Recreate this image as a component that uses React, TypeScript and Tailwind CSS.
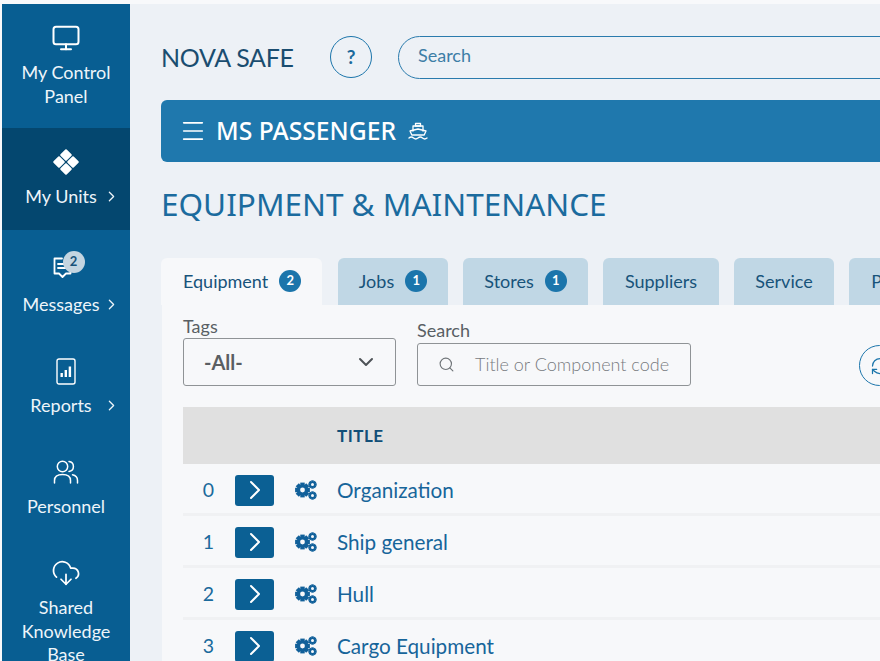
import { ChevronDown, ChevronRight, CloudDownload, Menu, Monitor, RotateCcw, Search } from 'lucide-react';

function UnitsIcon() {
  return (
    <svg width="28" height="28" viewBox="0 0 28 28" fill="white">
      <rect x="9.6" y="2.6" width="8.8" height="8.8" rx="1" transform="rotate(45 14 7)" />
      <rect x="9.6" y="16.6" width="8.8" height="8.8" rx="1" transform="rotate(45 14 21)" />
      <rect x="2.6" y="9.6" width="8.8" height="8.8" rx="1" transform="rotate(45 7 14)" />
      <rect x="16.6" y="9.6" width="8.8" height="8.8" rx="1" transform="rotate(45 21 14)" />
    </svg>
  );
}

function MessagesIcon() {
  return (
    <svg
      width="19"
      height="22"
      viewBox="0 0 19 22"
      fill="none"
      stroke="white"
      strokeWidth="1.8"
      strokeLinejoin="round"
      strokeLinecap="round"
      className="-translate-x-[4px] translate-y-[4px]"
    >
      <path d="M9 1.500H1.500V16.500H6L9.500 20 13 16.500H17.500V13" />
      <path d="M5 7h6M5 11h8" />
    </svg>
  );
}

function ReportsIcon() {
  return (
    <svg width="20" height="27" viewBox="0 0 20 27" fill="none">
      <rect x="1" y="1" width="18" height="25" rx="2" stroke="white" strokeWidth="1.4" />
      <rect x="4.5" y="15" width="2.4" height="4" fill="white" />
      <rect x="8.6" y="12" width="2.4" height="7" fill="white" />
      <rect x="12.7" y="8.5" width="2.4" height="10.5" fill="white" />
    </svg>
  );
}

function PersonnelIcon() {
  return (
    <svg width="26" height="26" viewBox="0 0 26 26" fill="none" stroke="white" strokeWidth="1.5" strokeLinecap="round">
      <circle cx="9.5" cy="7.5" r="5.2" />
      <path d="M1.5 24v-2.5c0-3.6 3-6 8-6s8 2.4 8 6V24" />
      <path d="M16 2.6c2.6.3 4.4 2.4 4.4 4.9s-1.800 4.600-4.400 4.900" />
      <path d="M19.500 15.800c3 .6 5 2.700 5 5.700V24" />
    </svg>
  );
}

function ShipIcon() {
  return (
    <svg width="20" height="18" viewBox="0 0 20 18" fill="none" stroke="white" strokeWidth="1.3" strokeLinejoin="round" strokeLinecap="round">
      <path d="M7.500 1.500h5V4h-5z" />
      <path d="M5 9V4h10v5" />
      <path d="M2 9l8-2 8 2-1.800 4H3.800z" />
      <path d="M1 16c1.500-1.300 3-1.300 4.500 0s3 1.300 4.500 0 3-1.300 4.500 0 3 1.300 4.500 0" />
    </svg>
  );
}

function Gear({ cx, cy, r, hole }: { cx: number; cy: number; r: number; hole: number }) {
  const teeth = [0, 45, 90, 135];
  return (
    <g>
      {teeth.map((a) => (
        <rect
          key={a}
          x={cx - r * 0.3}
          y={cy - r}
          width={r * 0.6}
          height={r * 2}
          fill="#11609a"
          transform={`rotate(${a} ${cx} ${cy})`}
        />
      ))}
      <circle cx={cx} cy={cy} r={r * 0.74} fill="#11609a" />
      <circle cx={cx} cy={cy} r={hole} fill="#f7f8fa" />
    </g>
  );
}

function GearsIcon() {
  return (
    <svg width="22" height="20" viewBox="0 0 22 20" className="shrink-0">
      <Gear cx={7.500} cy={10} r={7.400} hole={2.400} />
      <Gear cx={17.500} cy={4.500} r={4.200} hole={1.500} />
      <Gear cx={17.500} cy={15.500} r={4.200} hole={1.500} />
    </svg>
  );
}

function NavItem({
  icon,
  label,
  arrow,
  active,
  className,
}: {
  icon: React.ReactNode;
  label: string[];
  arrow?: boolean;
  active?: boolean;
  className?: string;
}) {
  return (
    <div className={`flex flex-col items-center pt-5 ${active ? 'bg-[#04476f]' : ''} ${className}`}>
      <div className="relative flex h-7 items-center justify-center">{icon}</div>
      <div className="relative mt-[9px] w-full text-center text-[18px] leading-[23.500px] text-[#eef5fa]">
        {label.map((line) => (
          <div key={line} className={arrow ? 'pr-[10px]' : ''}>
            {line}
          </div>
        ))}
        {arrow && <ChevronRight className="absolute left-[101px] top-[3px] h-[17px] w-[17px]" strokeWidth={1.800} />}
      </div>
    </div>
  );
}

function Badge({ n }: { n: number }) {
  return (
    <span className="flex h-[22px] w-[22px] items-center justify-center rounded-full bg-[#1b75ab] text-[13px] font-bold text-white">
      {n}
    </span>
  );
}

function Tab({ label, badge, width, active }: { label: string; badge?: number; width: string; active?: boolean }) {
  return (
    <div
      className={`flex h-[47px] shrink-0 items-center gap-[11px] rounded-t-md pb-[1px] text-[18px] text-[#17537a] ${width} ${
        active ? 'mr-[1px] bg-[#f7f8fa] pl-[22px]' : 'justify-center bg-[#c0d7e5]'
      }`}
    >
      <span>{label}</span>
      {badge !== undefined && <Badge n={badge} />}
    </div>
  );
}

const rows = ['Organization', 'Ship general', 'Hull', 'Cargo Equipment'];

export default function App() {
  return (
    <div className="flex h-[661px] w-[880px] overflow-hidden bg-[#f8f9fb] pl-[2px] pt-[4px] font-['Lato',sans-serif]">
      {/* Sidebar */}
      <aside className="w-[128px] shrink-0 bg-[#085e92]">
        <NavItem className="h-[124px]" icon={<Monitor className="h-[30px] w-[30px] text-white" strokeWidth={1.600} />} label={['My Control', 'Panel']} />
        <NavItem className="h-[102px]" active icon={<UnitsIcon />} label={['My Units']} arrow />
        <NavItem
          className="h-[107px] [&>div:last-child]:mt-[15px]"
          icon={
            <>
              <MessagesIcon />
              <span className="absolute left-[6px] top-[1px] flex h-[22px] w-[22px] items-center justify-center rounded-full bg-[#c3d5e1] text-[13px] font-bold text-[#17537a]">
                2
              </span>
            </>
          }
          label={['Messages']}
          arrow
        />
        <NavItem className="h-[101px]" icon={<ReportsIcon />} label={['Reports']} arrow />
        <NavItem className="h-[101px]" icon={<PersonnelIcon />} label={['Personnel']} />
        <NavItem className="h-[130px]" icon={<CloudDownload className="h-[30px] w-[30px] text-white" strokeWidth={1.400} />} label={['Shared', 'Knowledge', 'Base']} />
      </aside>

      {/* Main */}
      <main className="min-w-0 flex-1 overflow-hidden bg-[#edf1f6] pl-[31px]">
        <div className="w-[800px]">
          <div className="flex h-[96px] items-center pt-[10px]">
            <div className="w-[169px] shrink-0 whitespace-nowrap text-[25px] font-normal leading-none tracking-[-0.3px] text-[#1a4d70]">
              NOVA SAFE
            </div>
            <div className="flex h-[42px] w-[42px] shrink-0 items-center justify-center rounded-full border-[1.500px] border-[#1b75ab] text-[19px] font-bold text-[#1b6a9c]">
              ?
            </div>
            <div className="ml-[26px] flex h-[43px] flex-1 items-center rounded-full border-[1.500px] border-[#2a7bad] pb-[4px] pl-[19px] text-[18px] text-[#3d7ea6]">
              Search
            </div>
          </div>

          <div className="flex h-[62px] items-center rounded-l-md bg-[#1f78ad] pl-[18px] text-white">
            <Menu className="h-[28px] w-[28px]" strokeWidth={1.400} />
            <span className="ml-[9px] mr-[12px] font-['Noto_Sans',sans-serif] text-[24.700px] font-medium">MS PASSENGER</span>
            <ShipIcon />
          </div>

          <h1 className="mt-[18px] h-[54px] font-['Noto_Sans',sans-serif] text-[31.500px] leading-[48px] text-[#1b6b9e]">
            EQUIPMENT &amp; MAINTENANCE
          </h1>

          <div className="mt-[24px] flex gap-[15px]">
            <Tab label="Equipment" badge={2} width="w-[161px]" active />
            <Tab label="Jobs" badge={1} width="w-[110px]" />
            <Tab label="Stores" badge={1} width="w-[125px]" />
            <Tab label="Suppliers" width="w-[116px]" />
            <Tab label="Service" width="w-[100px]" />
            <Tab label="Parts" width="w-[85px]" />
          </div>

          <section className="ml-[1px] h-[400px] bg-[#f7f8fa] pl-[21px]">
            <div className="flex h-[102px] items-end pb-[21px]">
              <div className="w-[213px] shrink-0">
                <div className="mb-[1px] text-[18px] leading-[22px] text-[#595f64]">Tags</div>
                <div className="flex h-[48px] items-center justify-between rounded-[3px] border-[1.500px] border-[#8f9396] pl-[20px] pr-[17px] text-[20px] font-bold text-[#5a5f63]">
                  -All-
                  <ChevronDown className="h-[24px] w-[24px] text-[#4e5357]" strokeWidth={2} />
                </div>
              </div>
              <div className="ml-[21px] w-[274px] shrink-0">
                <div className="mb-[2px] text-[18px] leading-[22px] text-[#595f64]">Search</div>
                <div className="flex h-[43px] items-center rounded-[3px] border-[1.500px] border-[#8f9396] pl-[20px] text-[18px] font-light text-[#777b7f]">
                  <Search className="mr-[20px] h-[17px] w-[17px] text-[#6f7478]" strokeWidth={1.600} />
                  Title or Component code
                </div>
              </div>
              <div className="ml-[168px] flex h-[41px] w-[41px] items-center justify-center rounded-full border-[1.500px] border-[#1b75ab] text-[#1b75ab]">
                <RotateCcw className="h-[20px] w-[20px] -scale-y-100" strokeWidth={1.500} />
              </div>
            </div>

            <div className="flex h-[57px] items-center bg-[#e0e0e0] pl-[154px] text-[17px] font-bold tracking-[0.5px] text-[#124f78]">
              TITLE
            </div>

            {rows.map((title, i) => (
              <div key={title} className="flex h-[52px] items-center border-b-[3px] border-[#f0f1f3] pt-[3px]">
                <span className="w-[52px] pr-[1px] text-center text-[19.500px] text-[#1b6a9c]">{i}</span>
                <span className="flex h-[31px] w-[39px] shrink-0 items-center justify-center rounded-[3px] bg-[#0b6094] text-white">
                  <ChevronRight className="h-[32px] w-[32px]" strokeWidth={1.500} />
                </span>
                <span className="ml-[21px]">
                  <GearsIcon />
                </span>
                <span className="ml-[20px] pt-[1px] text-[20.700px] text-[#17659a]">{title}</span>
              </div>
            ))}
          </section>
        </div>
      </main>
    </div>
  );
}
